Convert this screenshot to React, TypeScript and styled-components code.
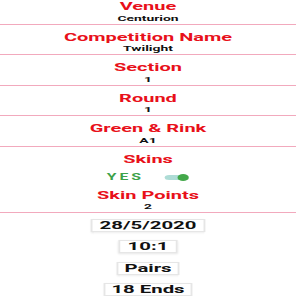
import React from 'react';
import styled, { createGlobalStyle } from 'styled-components';

const GlobalStyle = createGlobalStyle`
  html, body {
    margin: 0;
    padding: 0;
    background: #ffffff;
    overflow: hidden;
  }
`;

// the captured screen is stretched sideways, so the whole column is too
const Page = styled.div`
  width: 160px;
  transform: scaleX(1.85);
  transform-origin: top left;
  font-family: Roboto, 'Liberation Sans', sans-serif;
  text-align: center;
`;

const Field = styled.section`
  padding-top: 6px;
  border-bottom: 1px solid #f2a9bd;

  &:first-child {
    padding-top: 0;
  }
`;

const Title = styled.div`
  color: #e8101a;
  font-size: 10.8px;
  font-weight: 700;
  line-height: 13.5px;
`;

const Value = styled.div`
  color: #111111;
  font-size: 7.5px;
  font-weight: 700;
  line-height: 10px;
`;

const ToggleRow = styled.div`
  display: flex;
  align-items: center;
  justify-content: center;
  gap: 11px;
  height: 22.5px;
`;

const ToggleLabel = styled.span<{ on: boolean }>`
  color: ${({ on }) => (on ? '#3da24a' : '#888888')};
  font-size: 8.5px;
  font-weight: 700;
  letter-spacing: 1.6px;
  line-height: 10px;
`;

const Switch = styled.div`
  position: relative;
  width: 13.5px;
  height: 7px;
  display: flex;
  align-items: center;
`;

const Track = styled.div<{ on: boolean }>`
  width: 11.5px;
  height: 4.7px;
  border-radius: 3px;
  background: ${({ on }) => (on ? '#aedcd6' : '#cccccc')};
`;

const Thumb = styled.div<{ on: boolean }>`
  position: absolute;
  top: 0.15px;
  ${({ on }) => (on ? 'right: 0;' : 'left: 0;')}
  width: 6.7px;
  height: 6.7px;
  border-radius: 50%;
  background: ${({ on }) => (on ? '#43a84a' : '#f1f1f1')};
`;

const Chips = styled.div`
  display: flex;
  flex-direction: column;
  align-items: center;
  gap: 8.67px;
  padding-top: 5.5px;
`;

const Chip = styled.div`
  box-sizing: border-box;
  min-width: 32px;
  padding: 0 3.5px;
  border: 1px solid #e6e6e6;
  box-shadow: 0 1px 1.5px rgba(0, 0, 0, 0.1);
  background: #ffffff;
  color: #111111;
  font-size: 11px;
  font-weight: 700;
  line-height: 11px;
`;

const fields = [
  { label: 'Venue', value: 'Centurion' },
  { label: 'Competition Name', value: 'Twilight' },
  { label: 'Section', value: '1' },
  { label: 'Round', value: '1' },
  { label: 'Green & Rink', value: 'A1' },
];

const chips = ['28/5/2020', '10:1', 'Pairs', '18 Ends'];

const App = () => {
  const skins = true;

  return (
    <>
      <GlobalStyle />
      <Page>
        {fields.map((f) => (
          <Field key={f.label}>
            <Title>{f.label}</Title>
            <Value>{f.value}</Value>
          </Field>
        ))}
        <Field>
          <Title>Skins</Title>
          <ToggleRow>
            <ToggleLabel on={skins}>{skins ? 'YES' : 'NO'}</ToggleLabel>
            <Switch>
              <Track on={skins} />
              <Thumb on={skins} />
            </Switch>
          </ToggleRow>
          <Title>Skin Points</Title>
          <Value>2</Value>
        </Field>
        <Chips>
          {chips.map((c) => (
            <Chip key={c}>{c}</Chip>
          ))}
        </Chips>
      </Page>
    </>
  );
};

export default App;
